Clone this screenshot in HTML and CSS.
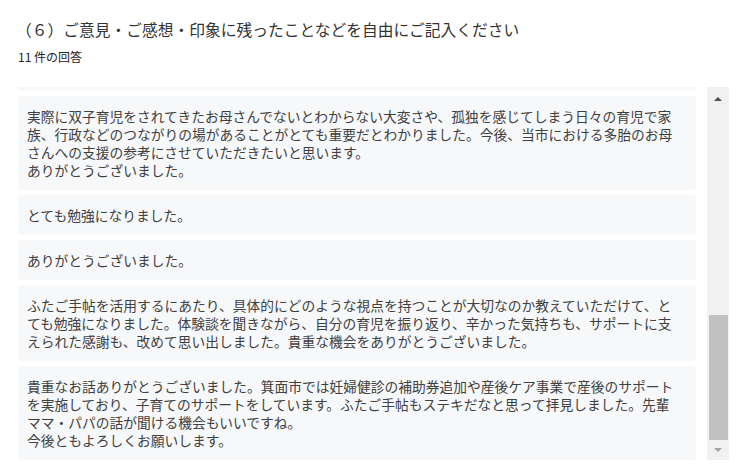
FILE: index.html
```html
<!DOCTYPE html>
<html lang="ja">
<head>
<meta charset="utf-8">
<title>回答</title>
<link rel="stylesheet" href="styles.css">
</head>
<body>
<div class="page">
  <h1 class="title">（６）ご意見・ご感想・印象に残ったことなどを自由にご記入ください</h1>
  <div class="count">11 件の回答</div>
  <div class="scroller">
    <div class="list">
      <div class="card card-empty"></div>
      <div class="card">実際に双子育児をされてきたお母さんでないとわからない大変さや、孤独を感じてしまう日々の育児で家族、行政などのつながりの場があることがとても重要だとわかりました。今後、当市における多胎のお母さんへの支援の参考にさせていただきたいと思います。<br>ありがとうございました。</div>
      <div class="card">とても勉強になりました。</div>
      <div class="card">ありがとうございました。</div>
      <div class="card">ふたご手帖を活用するにあたり、具体的にどのような視点を持つことが大切なのか教えていただけて、とても勉強になりました。体験談を聞きながら、自分の育児を振り返り、辛かった気持ちも、サポートに支えられた感謝も、改めて思い出しました。貴重な機会をありがとうございました。</div>
      <div class="card">貴重なお話ありがとうございました。箕面市では妊婦健診の補助券追加や産後ケア事業で産後のサポートを実施しており、子育てのサポートをしています。ふたご手帖もステキだなと思って拝見しました。先輩ママ・パパの話が聞ける機会もいいですね。<br>今後ともよろしくお願いします。</div>
    </div>
    <div class="scrollbar">
      <div class="arrow arrow-up"></div>
      <div class="track">
        <div class="thumb"></div>
      </div>
      <div class="arrow arrow-down"></div>
    </div>
  </div>
</div>
</body>
</html>
```

FILE: styles.css
```css
html, body {
  margin: 0;
  padding: 0;
  background: #ffffff;
}

body {
  font-family: "Noto Sans CJK JP", "Noto Sans", sans-serif;
  color: #3c3c3c;
}

.page {
  padding: 18px 7px 0 16px;
}

.title {
  margin: 0;
  font-size: 15.75px;
  line-height: 24px;
  font-weight: 400;
  color: #333333;
}

.count {
  margin-top: 7px;
  font-size: 12px;
  line-height: 16px;
  color: #222222;
  padding-left: 2px;
}

.scroller {
  margin-top: 22px;
  height: 373px;
  display: flex;
  gap: 11px;
  padding-left: 2px;
}

.list {
  width: 678px;
  height: 373px;
  overflow: hidden;
  display: flex;
  flex-direction: column;
  justify-content: flex-end;
  gap: 5px;
}

.card {
  flex: none;
  background: #f7f8fa;
  border-radius: 4px;
  padding: 11px 14px 11px 9px;
  font-size: 13.75px;
  line-height: 18px;
  color: #404040;
}

.card-empty {
  height: 40px;
}

.scrollbar {
  width: 22px;
  height: 373px;
  background: #f1f1f1;
  display: flex;
  flex-direction: column;
}

.arrow {
  height: 22px;
  flex: none;
  display: flex;
  align-items: center;
  justify-content: center;
}

.arrow::before {
  content: "";
  width: 0;
  height: 0;
  border-left: 4px solid transparent;
  border-right: 4px solid transparent;
}

.arrow-up::before {
  border-bottom: 4px solid #505050;
  margin-top: 1px;
}

.arrow-down::before {
  border-top: 4px solid #a3a3a3;
  margin-bottom: -1px;
}

.track {
  flex: 1;
  display: flex;
  flex-direction: column;
  justify-content: flex-end;
  padding: 0 1px 0 2px;
}

.thumb {
  height: 125px;
  background: #c1c1c1;
  margin-bottom: -2px;
}
```
